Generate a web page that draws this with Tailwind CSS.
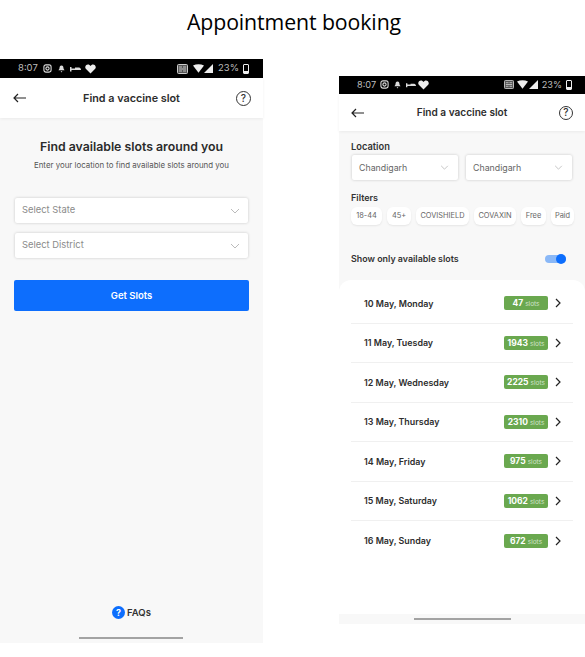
<!DOCTYPE html>
<html>
<head>
<meta charset="utf-8">
<script src="https://cdn.jsdelivr.net/npm/@tailwindcss/browser@4"></script>
</head>
<body class="bg-white font-['Inter',sans-serif] w-[585px] h-[657px] overflow-hidden">
<h1 class="h-[44px] pt-[8px] text-center pl-[3px] font-['Open_Sans',sans-serif] text-[21.300px] leading-[28px] text-black tracking-[-0.1px]">Appointment booking</h1>
<div class="flex justify-between items-start">
  <!-- Left phone -->
  <div class="w-[263px] h-[584px] mt-[15px] bg-[#f8f8f8] flex flex-col">
    <div class="h-[19px] bg-black text-[#bdbdbd] flex items-center justify-between pl-[18px] pr-[14px] text-[9.500px] shrink-0">
      <div class="flex items-center">
        <span class="w-[25px]">8:07</span>
        <svg class="w-[9px] h-[9px]" viewBox="0 0 10 10" fill="none" stroke="#ddd" stroke-width="1.2"><rect x="1" y="1" width="8" height="8" rx="2.2"/><circle cx="5" cy="5" r="1.8"/></svg>
        <svg class="ml-[6px]" width="7" height="8" viewBox="0 0 8 9" fill="#ddd"><path d="M4 0.5c1.7 0 2.2 1.500 2.300 3 .1 1 1.200 2 1.200 2.500H.5c0-.5 1.100-1.500 1.200-2.500C1.800 2 2.300.5 4 .5zM3 7h2l-1 1.500z"/></svg>
        <svg class="ml-[5px]" width="11" height="6" viewBox="0 0 11 6" fill="#ddd"><path d="M0 1h1.500v1.500H5V1.500h4c1 0 2 1 2 2.500H1.500v1.500H0z"/></svg>
        <svg class="ml-[4px]" width="11" height="10" viewBox="0 0 11 10" fill="#eee"><path d="M5.500 9.500L.8 4.800C-.6 3 .8.5 3 .5c1 0 2 .6 2.500 1.500C6 1.100 7 .5 8 .5c2.200 0 3.600 2.500 2.200 4.300z"/></svg>
      </div>
      <div class="flex items-center">
        <svg width="11" height="10" viewBox="0 0 11 10"><rect x=".5" y=".5" width="10" height="9" rx="1" fill="#555" stroke="#ccc"/><path d="M2 3h3M6 3h3M2 5h7M2 7h3M6 7h3" stroke="#ddd" stroke-width=".8"/></svg>
        <svg class="ml-[5px]" width="11" height="9" viewBox="0 0 13 10" fill="#eee"><path d="M0 1.500C4-.5 9-.5 13 1.500L6.500 10z"/></svg>
        <svg width="9" height="9" viewBox="0 0 10 10" fill="#eee"><path d="M10 0v10H0z"/></svg>
        <span class="ml-[5px]">23%</span>
        <span class="ml-[4px] w-[6px] h-[10px] border border-[#eee] rounded-[1px] flex items-end"><span class="w-full h-[2px] bg-[#eee]"></span></span>
      </div>
    </div>
    <div class="h-[40px] bg-white shadow-[0_1px_3px_rgba(0,0,0,0.06)] flex items-center justify-between pl-[13px] pr-[12px] shrink-0">
      <svg width="13" height="10" viewBox="0 0 13 10" fill="none" stroke="#222" stroke-width="1.200"><path d="M13 5H1M5 1L1 5l4 4"/></svg>
      <span class="text-[10.800px] pt-[2px] font-semibold text-[#2d2d2d] ml-[1px]">Find a vaccine slot</span>
      <span class="w-[15px] h-[15px] rounded-full border border-[#333] text-[10px] font-medium text-[#333] flex items-center justify-center">?</span>
    </div>
    <div class="text-center mt-[21px] text-[12.300px] leading-[16px] font-semibold text-[#2b2b2b]">Find available slots around you</div>
    <div class="text-center mt-[4px] text-[7.900px] leading-[12px] text-[#555]">Enter your location to find available slots around you</div>
    <div class="mx-[15px] mt-[27px] flex flex-col gap-[10px]">
      <div class="h-[25px] bg-white rounded-[2px] shadow-[0_0_3px_rgba(0,0,0,0.2)] flex items-center justify-between pl-[7px] pr-[8px] text-[9.400px] text-[#8a8a8a]">
        <span>Select State</span>
        <svg width="10" height="6" viewBox="0 0 10 6" fill="none" stroke="#bbb" stroke-width="1"><path d="M1 1l4 4 4-4"/></svg>
      </div>
      <div class="h-[25px] bg-white rounded-[2px] shadow-[0_0_3px_rgba(0,0,0,0.2)] flex items-center justify-between pl-[7px] pr-[8px] text-[9.400px] text-[#8a8a8a]">
        <span>Select District</span>
        <svg width="10" height="6" viewBox="0 0 10 6" fill="none" stroke="#bbb" stroke-width="1"><path d="M1 1l4 4 4-4"/></svg>
      </div>
    </div>
    <div class="mx-[14px] mt-[22px] h-[31px] pt-[1px] bg-[#0d6efd] rounded-[2px] flex items-center justify-center text-white text-[9.500px] font-semibold">Get Slots</div>
    <div class="mt-auto flex items-center justify-center gap-[2px] pb-[17px]">
      <span class="w-[13px] h-[13px] rounded-full bg-[#0d6efd] text-white text-[9px] font-bold flex items-center justify-center">?</span>
      <span class="text-[9.500px] font-semibold text-[#333]">FAQs</span>
    </div>
    <div class="h-[2px] w-[104px] bg-[#a3a3a3] ml-[79px] mb-[4px] shrink-0"></div>
  </div>
  <!-- Right phone -->
  <div class="w-[246px] h-[548px] mt-[32px] bg-[#f8f8f8] flex flex-col">
    <div class="h-[18px] bg-black text-[#bdbdbd] flex items-center justify-between pl-[18px] pr-[13px] text-[9.200px] shrink-0">
      <div class="flex items-center">
        <span class="w-[23px]">8:07</span>
        <svg class="w-[9px] h-[9px]" viewBox="0 0 10 10" fill="none" stroke="#ddd" stroke-width="1.2"><rect x="1" y="1" width="8" height="8" rx="2.2"/><circle cx="5" cy="5" r="1.8"/></svg>
        <svg class="ml-[5px]" width="7" height="8" viewBox="0 0 8 9" fill="#ddd"><path d="M4 0.5c1.7 0 2.2 1.500 2.300 3 .1 1 1.200 2 1.200 2.500H.5c0-.5 1.100-1.500 1.200-2.500C1.800 2 2.300.5 4 .5zM3 7h2l-1 1.500z"/></svg>
        <svg class="ml-[5px]" width="10" height="6" viewBox="0 0 11 6" fill="#ddd"><path d="M0 1h1.500v1.500H5V1.500h4c1 0 2 1 2 2.500H1.500v1.500H0z"/></svg>
        <svg class="ml-[2px]" width="11" height="10" viewBox="0 0 11 10" fill="#eee"><path d="M5.500 9.500L.8 4.800C-.6 3 .8.5 3 .5c1 0 2 .6 2.500 1.500C6 1.100 7 .5 8 .5c2.200 0 3.600 2.500 2.200 4.300z"/></svg>
      </div>
      <div class="flex items-center">
        <svg width="10" height="9" viewBox="0 0 11 10"><rect x=".5" y=".5" width="10" height="9" rx="1" fill="#555" stroke="#ccc"/><path d="M2 3h3M6 3h3M2 5h7M2 7h3M6 7h3" stroke="#ddd" stroke-width=".8"/></svg>
        <svg class="ml-[3px]" width="11" height="9" viewBox="0 0 13 10" fill="#eee"><path d="M0 1.500C4-.5 9-.5 13 1.500L6.500 10z"/></svg>
        <svg class="ml-[1px]" width="9" height="9" viewBox="0 0 10 10" fill="#eee"><path d="M10 0v10H0z"/></svg>
        <span class="ml-[4px]">23%</span>
        <span class="ml-[4px] w-[6px] h-[10px] border border-[#eee] rounded-[1px] flex items-end"><span class="w-full h-[2px] bg-[#eee]"></span></span>
      </div>
    </div>
    <div class="h-[37px] bg-white shadow-[0_1px_3px_rgba(0,0,0,0.06)] flex items-center justify-between pl-[12px] pr-[12px] shrink-0">
      <svg width="13" height="10" viewBox="0 0 13 10" fill="none" stroke="#222" stroke-width="1.200"><path d="M13 5H1M5 1L1 5l4 4"/></svg>
      <span class="text-[10.100px] pt-[1px] font-semibold text-[#2d2d2d] ml-[1px]">Find a vaccine slot</span>
      <span class="w-[14px] h-[14px] rounded-full border border-[#333] text-[10px] font-medium text-[#333] flex items-center justify-center">?</span>
    </div>
    <div class="ml-[12px] mt-[10px] text-[9.300px] leading-[12px] font-semibold text-[#333]">Location</div>
    <div class="flex gap-[8px] mx-[13px] mt-[2px]">
      <div class="w-[106px] h-[25px] bg-white rounded-[2px] shadow-[0_0_3px_rgba(0,0,0,0.2)] flex items-center justify-between pl-[7px] pr-[9px] text-[8.800px] text-[#666]">
        <span>Chandigarh</span>
        <svg width="9" height="5" viewBox="0 0 10 6" fill="none" stroke="#bbb" stroke-width="1"><path d="M1 1l4 4 4-4"/></svg>
      </div>
      <div class="w-[106px] h-[25px] bg-white rounded-[2px] shadow-[0_0_3px_rgba(0,0,0,0.2)] flex items-center justify-between pl-[7px] pr-[9px] text-[8.800px] text-[#666]">
        <span>Chandigarh</span>
        <svg width="9" height="5" viewBox="0 0 10 6" fill="none" stroke="#bbb" stroke-width="1"><path d="M1 1l4 4 4-4"/></svg>
      </div>
    </div>
    <div class="ml-[12px] mt-[12px] text-[9px] leading-[12px] font-semibold text-[#333]">Filters</div>
    <div class="flex gap-[5px] ml-[12px] mt-[3px] text-[7.400px] text-[#666]">
      <span class="h-[18px] w-[31px] bg-white rounded-[6px] shadow-[0_1px_2px_rgba(0,0,0,0.08)] flex items-center justify-center shrink-0">18-44</span>
      <span class="h-[18px] w-[24px] bg-white rounded-[6px] shadow-[0_1px_2px_rgba(0,0,0,0.08)] flex items-center justify-center shrink-0">45+</span>
      <span class="h-[18px] w-[53px] bg-white rounded-[6px] shadow-[0_1px_2px_rgba(0,0,0,0.08)] flex items-center justify-center shrink-0">COVISHIELD</span>
      <span class="h-[18px] w-[42px] bg-white rounded-[6px] shadow-[0_1px_2px_rgba(0,0,0,0.08)] flex items-center justify-center shrink-0">COVAXIN</span>
      <span class="h-[18px] w-[25px] bg-white rounded-[6px] shadow-[0_1px_2px_rgba(0,0,0,0.08)] flex items-center justify-center shrink-0">Free</span>
      <span class="h-[18px] w-[23px] bg-white rounded-[6px] shadow-[0_1px_2px_rgba(0,0,0,0.08)] flex items-center justify-center shrink-0">Paid</span>
    </div>
    <div class="flex items-center justify-between ml-[12px] mr-[19px] mt-[28px] h-[12px]">
      <span class="text-[8.900px] font-semibold text-[#333]">Show only available slots</span>
      <span class="relative w-[21px] h-[8px] rounded-full bg-[#8ab8f7]"><span class="absolute right-0 top-[-1px] w-[10px] h-[10px] rounded-full bg-[#0d6efd]"></span></span>
    </div>
    <div class="mt-[15px] flex-1 bg-white rounded-t-[12px] pt-[4px] px-[12px] flex flex-col">
      <div class="h-[39.500px] shrink-0 border-b border-[#f0f0f0] flex items-center justify-between pl-[13px] pr-[12px]"><span class="text-[8.900px] font-semibold text-[#2d2d2d]">10 May, Monday</span><div class="flex items-center gap-[7px]"><span class="w-[44px] h-[14px] leading-[14px] rounded-[2px] bg-[#6aa84f] text-white text-[8.500px] font-bold flex items-baseline justify-center gap-[2px]">47<span class="text-[6.500px] font-normal text-white/70">slots</span></span><svg width="6" height="10" viewBox="0 0 6 10" fill="none" stroke="#222" stroke-width="1.200"><path d="M1 1l4 4-4 4"/></svg></div></div>
      <div class="h-[39.500px] shrink-0 border-b border-[#f0f0f0] flex items-center justify-between pl-[13px] pr-[12px]"><span class="text-[8.900px] font-semibold text-[#2d2d2d]">11 May, Tuesday</span><div class="flex items-center gap-[7px]"><span class="w-[44px] h-[14px] leading-[14px] rounded-[2px] bg-[#6aa84f] text-white text-[8.500px] font-bold flex items-baseline justify-center gap-[2px]">1943<span class="text-[6.500px] font-normal text-white/70">slots</span></span><svg width="6" height="10" viewBox="0 0 6 10" fill="none" stroke="#222" stroke-width="1.200"><path d="M1 1l4 4-4 4"/></svg></div></div>
      <div class="h-[39.500px] shrink-0 border-b border-[#f0f0f0] flex items-center justify-between pl-[13px] pr-[12px]"><span class="text-[8.900px] font-semibold text-[#2d2d2d]">12 May, Wednesday</span><div class="flex items-center gap-[7px]"><span class="w-[44px] h-[14px] leading-[14px] rounded-[2px] bg-[#6aa84f] text-white text-[8.500px] font-bold flex items-baseline justify-center gap-[2px]">2225<span class="text-[6.500px] font-normal text-white/70">slots</span></span><svg width="6" height="10" viewBox="0 0 6 10" fill="none" stroke="#222" stroke-width="1.200"><path d="M1 1l4 4-4 4"/></svg></div></div>
      <div class="h-[39.500px] shrink-0 border-b border-[#f0f0f0] flex items-center justify-between pl-[13px] pr-[12px]"><span class="text-[8.900px] font-semibold text-[#2d2d2d]">13 May, Thursday</span><div class="flex items-center gap-[7px]"><span class="w-[44px] h-[14px] leading-[14px] rounded-[2px] bg-[#6aa84f] text-white text-[8.500px] font-bold flex items-baseline justify-center gap-[2px]">2310<span class="text-[6.500px] font-normal text-white/70">slots</span></span><svg width="6" height="10" viewBox="0 0 6 10" fill="none" stroke="#222" stroke-width="1.200"><path d="M1 1l4 4-4 4"/></svg></div></div>
      <div class="h-[39.500px] shrink-0 border-b border-[#f0f0f0] flex items-center justify-between pl-[13px] pr-[12px]"><span class="text-[8.900px] font-semibold text-[#2d2d2d]">14 May, Friday</span><div class="flex items-center gap-[7px]"><span class="w-[44px] h-[14px] leading-[14px] rounded-[2px] bg-[#6aa84f] text-white text-[8.500px] font-bold flex items-baseline justify-center gap-[2px]">975<span class="text-[6.500px] font-normal text-white/70">slots</span></span><svg width="6" height="10" viewBox="0 0 6 10" fill="none" stroke="#222" stroke-width="1.200"><path d="M1 1l4 4-4 4"/></svg></div></div>
      <div class="h-[39.500px] shrink-0 border-b border-[#f0f0f0] flex items-center justify-between pl-[13px] pr-[12px]"><span class="text-[8.900px] font-semibold text-[#2d2d2d]">15 May, Saturday</span><div class="flex items-center gap-[7px]"><span class="w-[44px] h-[14px] leading-[14px] rounded-[2px] bg-[#6aa84f] text-white text-[8.500px] font-bold flex items-baseline justify-center gap-[2px]">1062<span class="text-[6.500px] font-normal text-white/70">slots</span></span><svg width="6" height="10" viewBox="0 0 6 10" fill="none" stroke="#222" stroke-width="1.200"><path d="M1 1l4 4-4 4"/></svg></div></div>
      <div class="h-[39.500px] shrink-0 flex items-center justify-between pl-[13px] pr-[12px]"><span class="text-[8.900px] font-semibold text-[#2d2d2d]">16 May, Sunday</span><div class="flex items-center gap-[7px]"><span class="w-[44px] h-[14px] leading-[14px] rounded-[2px] bg-[#6aa84f] text-white text-[8.500px] font-bold flex items-baseline justify-center gap-[2px]">672<span class="text-[6.500px] font-normal text-white/70">slots</span></span><svg width="6" height="10" viewBox="0 0 6 10" fill="none" stroke="#222" stroke-width="1.200"><path d="M1 1l4 4-4 4"/></svg></div></div>
    </div>
    <div class="h-[10px] shrink-0 flex justify-center pt-[4px]"><div class="h-[2px] w-[97px] bg-[#a3a3a3]"></div></div>
  </div>
</div>
</body>
</html>
